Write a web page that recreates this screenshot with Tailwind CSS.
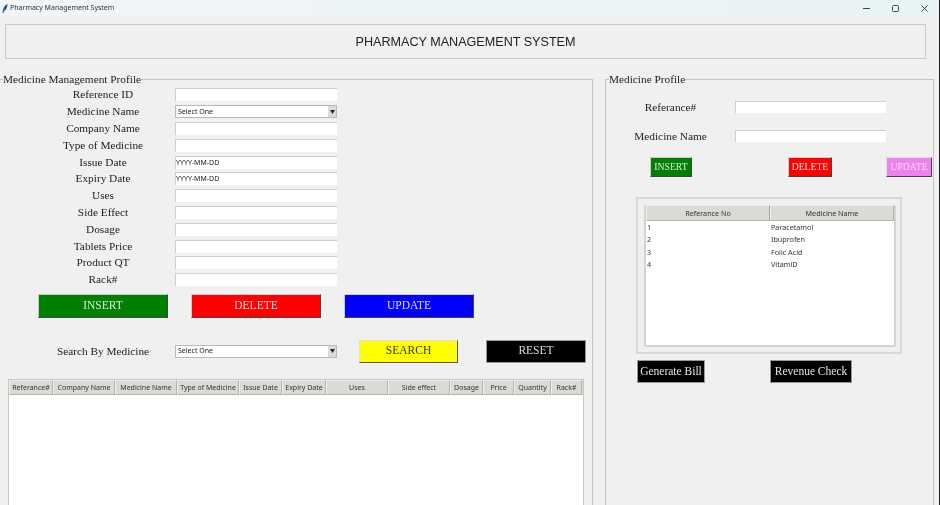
<!DOCTYPE html>
<html lang="en">
<head>
    <meta charset="UTF-8">
    <title>Pharmacy Management System</title>
    <script src="https://cdn.jsdelivr.net/npm/@tailwindcss/browser@4"></script>
</head>
<body class="bg-[#f0f0f0]">
<div class="w-[940px] h-[505px] overflow-hidden flex flex-col bg-[#f0f0f0] border-r border-[#222] font-['Liberation_Serif',serif] text-[#222] blur-[0.3px]">

    <!-- title bar -->
    <div class="h-[16px] shrink-0 flex items-center justify-between bg-gradient-to-r from-[#f1f5f8] to-[#e8f3f6] font-['Noto_Sans',sans-serif]">
        <div class="flex items-center h-full">
            <svg class="ml-[2px] w-[6px] h-[9px]" viewBox="0 0 6 9"><path d="M5.5 0 C3 1 1.5 3.5 1 6 L0.5 9 L1.5 9 L2 7 C4 6 5.5 3 5.5 0Z" fill="#1f4e7a"/></svg>
            <span class="ml-[2px] mt-[1px] text-[7px] text-[#333]">Pharmacy Management System</span>
        </div>
        <div class="flex items-center h-full pr-[10px] gap-[20px] mt-[1px]">
            <svg class="w-[9px] h-[9px]" viewBox="0 0 9 9"><path d="M1 4.5H8" stroke="#444" stroke-width="1"/></svg>
            <svg class="w-[9px] h-[9px]" viewBox="0 0 9 9"><rect x="1.5" y="1.5" width="6" height="6" rx="1" fill="none" stroke="#444" stroke-width="1"/></svg>
            <svg class="w-[9px] h-[9px]" viewBox="0 0 9 9"><path d="M1.5 1.5L7.5 7.5M7.5 1.5L1.5 7.5" stroke="#444" stroke-width="1"/></svg>
        </div>
    </div>

    <!-- heading -->
    <div class="mt-[8px] ml-[5px] w-[921px] h-[35px] shrink-0 border border-[#c8c8c8] pt-[1px] flex items-center justify-center font-['Liberation_Sans',sans-serif] text-[12.6px] text-[#222]">PHARMACY MANAGEMENT SYSTEM</div>

    <div class="mt-[13px] flex items-start">
        <!-- left panel -->
        <fieldset class="w-[593px] h-[440px] shrink-0 border-t border-r border-[#c4c4c4] pl-[8px]">
            <legend class="-ml-[5px] text-[11.3px] leading-[14px]">Medicine Management Profile</legend>

            <div class="grid grid-cols-[175px_162px] items-center auto-rows-[16.8px] text-[11.3px] text-center -ml-[8px] mt-[0.5px]">
                <span class="pl-[31px]">Reference ID</span><input class="w-[162px] h-[13px] bg-white border-t border-l border-[#cfcfcf]">
                <span class="pl-[31px]">Medicine Name</span>
                <div class="w-[162px] h-[13px] bg-white border border-[#bdb9b0] flex items-center justify-between font-['Noto_Sans',sans-serif] text-[7px] text-left pl-[2px]"><span class="mt-[1px]">Select One</span><span class="w-[8px] h-full bg-[#dcdad5] flex items-center justify-center"><svg class="w-[5px] h-[4px]" viewBox="0 0 5 4"><path d="M0 0H5L2.5 4Z" fill="#222"/></svg></span></div>
                <span class="pl-[31px]">Company Name</span><input class="w-[162px] h-[13px] bg-white border-t border-l border-[#cfcfcf]">
                <span class="pl-[31px]">Type of Medicine</span><input class="w-[162px] h-[13px] bg-white border-t border-l border-[#cfcfcf]">
                <span class="pl-[31px]">Issue Date</span><div class="w-[162px] h-[13px] bg-white border-t border-l border-[#cfcfcf] font-['Noto_Sans',sans-serif] text-[7px] leading-[12px] text-left">YYYY-MM-DD</div>
                <span class="pl-[31px]">Expiry Date</span><div class="w-[162px] h-[13px] bg-white border-t border-l border-[#cfcfcf] font-['Noto_Sans',sans-serif] text-[7px] leading-[12px] text-left">YYYY-MM-DD</div>
                <span class="pl-[31px]">Uses</span><input class="w-[162px] h-[13px] bg-white border-t border-l border-[#cfcfcf]">
                <span class="pl-[31px]">Side Effect</span><input class="w-[162px] h-[13px] bg-white border-t border-l border-[#cfcfcf]">
                <span class="pl-[31px]">Dosage</span><input class="w-[162px] h-[13px] bg-white border-t border-l border-[#cfcfcf]">
                <span class="pl-[31px]">Tablets Price</span><input class="w-[162px] h-[13px] bg-white border-t border-l border-[#cfcfcf]">
                <span class="pl-[31px]">Product QT</span><input class="w-[162px] h-[13px] bg-white border-t border-l border-[#cfcfcf]">
                <span class="pl-[31px]">Rack#</span><input class="w-[162px] h-[13px] bg-white border-t border-l border-[#cfcfcf]">
            </div>

            <div class="mt-[5.5px] ml-[30px] flex gap-[23px] text-[11.5px]">
                <button class="w-[130px] h-[24px] bg-[#008000] text-[#dfeadf] border border-[#ccc] border-r-[#444] border-b-[#444]">INSERT</button>
                <button class="w-[130px] h-[24px] bg-[#ff0000] text-[#fbe0e0] border border-[#ccc] border-r-[#444] border-b-[#444]">DELETE</button>
                <button class="w-[130px] h-[24px] bg-[#0000ff] text-[#dde0ff] border border-[#ccc] border-r-[#444] border-b-[#444]">UPDATE</button>
            </div>

            <div class="mt-[22px] flex items-center text-[11.5px] -ml-[8px]">
                <span class="w-[166px] pl-[40px] text-center text-[11.3px]">Search By Medicine</span>
                <div class="ml-[9px] w-[162px] h-[13px] bg-white border border-[#bdb9b0] flex items-center justify-between font-['Noto_Sans',sans-serif] text-[7px] pl-[2px]"><span class="mt-[1px]">Select One</span><span class="w-[8px] h-full bg-[#dcdad5] flex items-center justify-center"><svg class="w-[5px] h-[4px]" viewBox="0 0 5 4"><path d="M0 0H5L2.5 4Z" fill="#222"/></svg></span></div>
                <button class="ml-[22px] w-[99px] h-[23px] bg-[#ffff00] text-[#333] border border-[#ddd] border-r-[#555] border-b-[#555]">SEARCH</button>
                <button class="ml-[28px] w-[100px] h-[23px] bg-black text-[#ddd] border border-[#999]">RESET</button>
            </div>

            <!-- medicine table -->
            <div class="mt-[16px] w-[576px] h-[140px] bg-white border border-[#c8c5be]">
                <div class="grid grid-cols-[44px_62px_62px_62px_43px_44px_62px_62px_33px_31px_37px_31px] h-[15px] bg-[#dcdad5] font-['Noto_Sans',sans-serif] text-[7px] leading-[13px] text-center text-[#333]">
                    <span class="border border-[#f0efec] border-r-[#b5b2aa] border-b-[#b5b2aa]">Referance#</span>
                    <span class="border border-[#f0efec] border-r-[#b5b2aa] border-b-[#b5b2aa]">Company Name</span>
                    <span class="border border-[#f0efec] border-r-[#b5b2aa] border-b-[#b5b2aa]">Medicine Name</span>
                    <span class="border border-[#f0efec] border-r-[#b5b2aa] border-b-[#b5b2aa] whitespace-nowrap overflow-hidden">Type of Medicine</span>
                    <span class="border border-[#f0efec] border-r-[#b5b2aa] border-b-[#b5b2aa]">Issue Date</span>
                    <span class="border border-[#f0efec] border-r-[#b5b2aa] border-b-[#b5b2aa]">Expiry Date</span>
                    <span class="border border-[#f0efec] border-r-[#b5b2aa] border-b-[#b5b2aa]">Uses</span>
                    <span class="border border-[#f0efec] border-r-[#b5b2aa] border-b-[#b5b2aa]">Side effect</span>
                    <span class="border border-[#f0efec] border-r-[#b5b2aa] border-b-[#b5b2aa]">Dosage</span>
                    <span class="border border-[#f0efec] border-r-[#b5b2aa] border-b-[#b5b2aa]">Price</span>
                    <span class="border border-[#f0efec] border-r-[#b5b2aa] border-b-[#b5b2aa]">Quantity</span>
                    <span class="border border-[#f0efec] border-r-[#b5b2aa] border-b-[#b5b2aa]">Rack#</span>
                </div>
            </div>
        </fieldset>

        <!-- right panel -->
        <fieldset class="ml-[12px] w-[329px] h-[440px] shrink-0 border border-[#c4c4c4] pl-[31px]">
            <legend class="-ml-[28px] text-[11.3px] leading-[14px]">Medicine Profile</legend>

            <div class="mt-[13px] flex items-center text-[11.3px] -ml-[31px]">
                <span class="w-[129px] text-center">Referance#</span>
                <input class="w-[151px] h-[12px] bg-white border-t border-l border-[#cfcfcf]">
            </div>
            <div class="mt-[12px] flex items-center text-[11.3px] -ml-[31px]">
                <span class="w-[129px] text-center">Medicine Name</span>
                <input class="w-[151px] h-[12px] bg-white border-t border-l border-[#cfcfcf]">
            </div>

            <div class="mt-[12px] ml-[13px] flex text-[9.7px]">
                <button class="w-[42px] h-[20px] bg-[#008000] text-[#dfeadf] border border-[#ccc] border-r-[#444] border-b-[#444]">INSERT</button>
                <button class="ml-[96px] w-[44px] h-[20px] bg-[#ff0000] text-[#fbe0e0] border border-[#ccc] border-r-[#444] border-b-[#444]">DELETE</button>
                <button class="ml-[54px] w-[46px] h-[20px] bg-[#ee82ee] text-[#f8dcf8] border border-[#ddd] border-r-[#444] border-b-[#444]">UPDATE</button>
            </div>

            <!-- reference table -->
            <div class="mt-[20px] -ml-[1px] w-[266px] h-[157px] border-2 border-[#d8d8d8] pt-[6px] pl-[6px]">
                <div class="w-[252px] h-[142px] bg-white border-2 border-[#d6d3cc] border-t-0 rounded-[2px] font-['Noto_Sans',sans-serif] text-[7.2px] text-[#333]">
                    <div class="grid grid-cols-[124px_124px] h-[16px] bg-[#dcdad5] leading-[14px] text-center">
                        <span class="border border-[#f0efec] border-r-[#a8a59d] border-b-[#b5b2aa]">Referance No</span>
                        <span class="border border-[#f0efec] border-r-[#b5b2aa] border-b-[#b5b2aa]">Medicine Name</span>
                    </div>
                    <div class="grid grid-cols-[124px_124px] auto-rows-[12.4px] leading-[12.4px] pl-[1px]">
                        <span>1</span><span>Paracetamol</span>
                        <span>2</span><span>Ibuprofen</span>
                        <span>3</span><span>Folic Acid</span>
                        <span>4</span><span>VitamiD</span>
                    </div>
                </div>
            </div>

            <div class="mt-[6px] flex text-[11.5px] whitespace-nowrap">
                <button class="w-[68px] h-[23px] bg-black text-[#e4e4e4] border border-[#999]">Generate Bill</button>
                <button class="ml-[65px] w-[82px] h-[23px] bg-black text-[#e4e4e4] border border-[#999]">Revenue Check</button>
            </div>
        </fieldset>
    </div>
</div>
</body>
</html>
